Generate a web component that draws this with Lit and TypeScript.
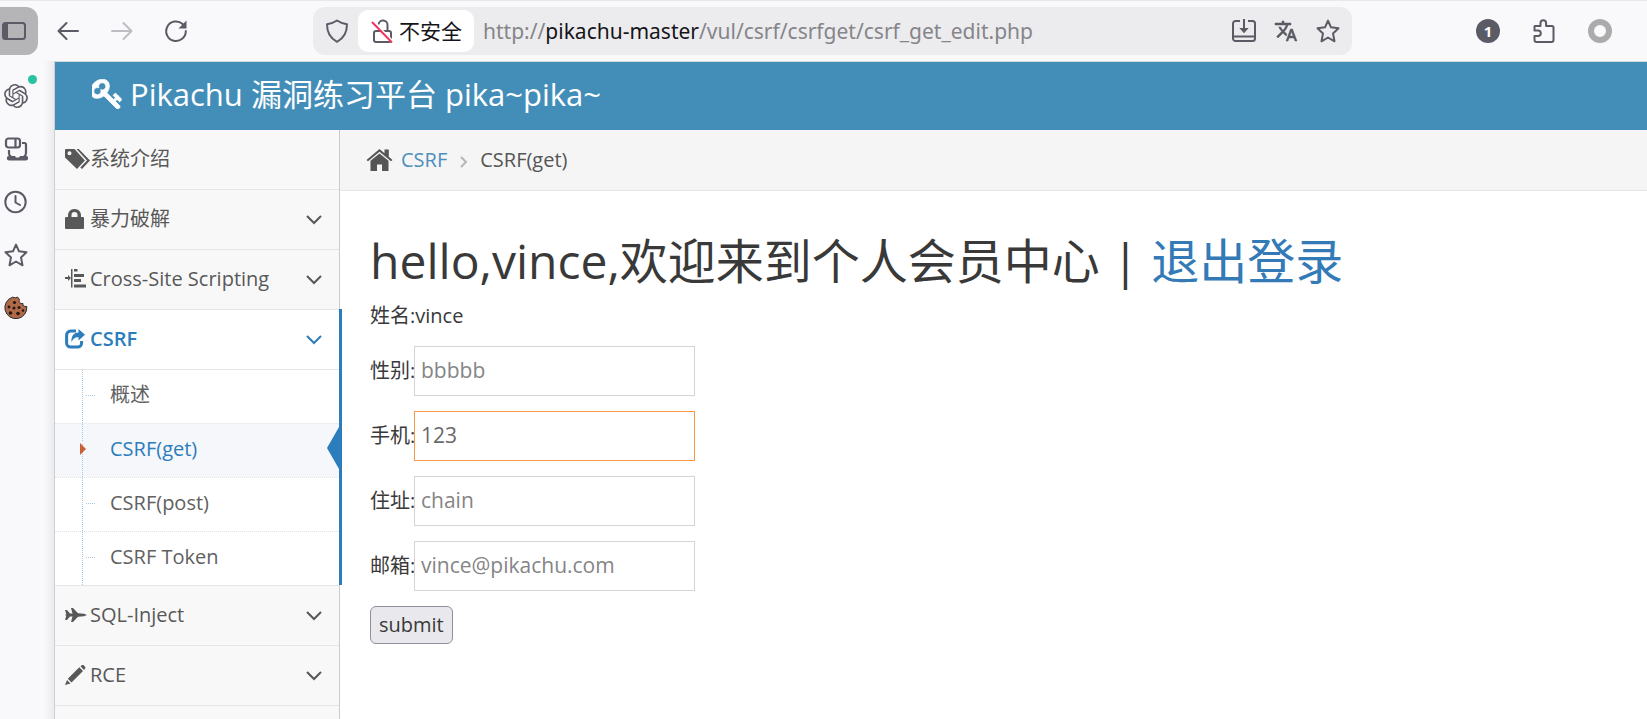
import { LitElement, html, css, svg, nothing } from "lit";
import { customElement, property } from "lit/decorators.js";

const icons: Record<string, { box: string; art: unknown }> = {
  panel: {
    box: "0 0 24 24",
    art: svg`<rect x="1" y="4" width="22" height="16" rx="2.5" fill="none" stroke="currentColor" stroke-width="2"/><path d="M1 5h5v14H1z"/>`,
  },
  back: {
    box: "0 0 24 24",
    art: svg`<path d="M22 12H3M10.500 4L2.500 12l8 8" fill="none" stroke="currentColor" stroke-width="2" stroke-linecap="round" stroke-linejoin="round"/>`,
  },
  forward: {
    box: "0 0 24 24",
    art: svg`<path d="M2 12h19M13.500 4l8 8-8 8" fill="none" stroke="currentColor" stroke-width="2" stroke-linecap="round" stroke-linejoin="round"/>`,
  },
  reload: {
    box: "0 0 24 24",
    art: svg`<path d="M18.600 5A9.800 9.800 0 1 0 21.800 12" fill="none" stroke="currentColor" stroke-width="2" stroke-linecap="round"/><path d="M22.500 1.500v8h-8z"/>`,
  },
  shield: {
    box: "0 0 24 24",
    art: svg`<path d="M12 1.500c3 2 6 3.300 10 3.800C22 13 19.500 19 12 22.800 4.500 19 2 13 2 5.300c4-.5 7-1.800 10-3.800z" fill="none" stroke="currentColor" stroke-width="2" stroke-linejoin="round"/>`,
  },
  insecure: {
    box: "0 0 24 24",
    art: svg`<path d="M7.500 5.500A4.500 4.500 0 0 1 16.500 6.500V12M3 14v7a2 2 0 0 0 2 2h13a2 2 0 0 0 2-2v-7a2 2 0 0 0-2-2H5a2 2 0 0 0-2 2z" fill="none" stroke="currentColor" stroke-width="2"/><path d="M2.500 2.500l19 19.500" stroke="#fff" stroke-width="2"/><path d="M1 3l20 20.500" stroke="#f0355f" stroke-width="2"/>`,
  },
  download: {
    box: "0 0 24 24",
    art: svg`<path d="M8 2H3.500A2.500 2.500 0 0 0 1 4.500v15A2.500 2.500 0 0 0 3.500 22h17a2.500 2.500 0 0 0 2.500-2.500v-15A2.500 2.500 0 0 0 20.500 2H16M1 17.500h22M12 0v11" fill="none" stroke="currentColor" stroke-width="2"/><path d="M7.300 9h9.400L12 14.200z"/>`,
  },
  translate: {
    box: "0 1 24 22",
    art: svg`<path stroke="currentColor" stroke-width=".5" d="M12.870 15.070l-2.540-2.510.03-.03c1.740-1.940 2.980-4.170 3.710-6.530H17V4h-7V2H8v2H1v1.990h11.170C11.500 7.920 10.440 9.750 9 11.350 8.070 10.320 7.300 9.190 6.690 8h-2c.73 1.630 1.730 3.170 2.980 4.560l-5.090 5.020L4 19l5-5 3.110 3.110.76-2.040zM18.500 10h-2L12 22h2l1.120-3h4.750L21 22h2l-4.500-12zm-2.620 7l1.620-4.330L19.120 17h-3.240z"/>`,
  },
  star: {
    box: "0 0 24 24",
    art: svg`<path d="M12 1.600l3 6.700 7.500.9-5.500 5.200 1.500 7.900L12 18.500l-6.500 3.800L7 14.400 1.500 9.200 9 8.300z" fill="none" stroke="currentColor" stroke-width="2" stroke-linejoin="round"/>`,
  },
  puzzle: {
    box: "0 0 24 24",
    art: svg`<path d="M3 7h5.500V4a2.800 2.800 0 0 1 5.600 0v3H20a1.500 1.500 0 0 1 1.500 1.500V21a2 2 0 0 1-2 2h-15a2 2 0 0 1-2-2v-4H6a2.800 2.800 0 0 0 0-5.600H2.500V7.500z" fill="none" stroke="currentColor" stroke-width="2" stroke-linejoin="round"/>`,
  },
  ring: {
    box: "0 0 24 24",
    art: svg`<circle cx="12" cy="12" r="9" fill="none" stroke="#ababab" stroke-width="6"/>`,
  },
  knot: {
    box: "0 0 24 24",
    art: svg`<path d="M22.2819 9.8211a5.9847 5.9847 0 0 0-.5157-4.9108 6.0462 6.0462 0 0 0-6.5098-2.9A6.0651 6.0651 0 0 0 4.9807 4.1818a5.9847 5.9847 0 0 0-3.9977 2.9 6.0462 6.0462 0 0 0 .7427 7.0966 5.98 5.98 0 0 0 .511 4.9107 6.051 6.051 0 0 0 6.5146 2.9001A5.9847 5.9847 0 0 0 13.2599 24a6.0557 6.0557 0 0 0 5.7718-4.2058 5.9894 5.9894 0 0 0 3.9977-2.9001 6.0557 6.0557 0 0 0-.7475-7.0729zm-9.022 12.6081a4.4755 4.4755 0 0 1-2.8764-1.0408l.1419-.0804 4.7783-2.7582a.7948.7948 0 0 0 .3927-.6813v-6.7369l2.02 1.1686a.071.071 0 0 1 .038.052v5.5826a4.504 4.504 0 0 1-4.4945 4.4944zm-9.6607-4.1254a4.4708 4.4708 0 0 1-.5346-3.0137l.142.0852 4.783 2.7582a.7712.7712 0 0 0 .7806 0l5.8428-3.3685v2.3324a.0804.0804 0 0 1-.0332.0615L9.74 19.9502a4.4992 4.4992 0 0 1-6.1408-1.6464zM2.3408 7.8956a4.485 4.485 0 0 1 2.3655-1.9728V11.6a.7664.7664 0 0 0 .3879.6765l5.8144 3.3543-2.0201 1.1685a.0757.0757 0 0 1-.071 0l-4.8303-2.7865A4.504 4.504 0 0 1 2.3408 7.872zm16.5963 3.8558L13.1038 8.364 15.1192 7.2a.0757.0757 0 0 1 .071 0l4.8303 2.7913a4.4944 4.4944 0 0 1-.6765 8.1042v-5.6772a.79.79 0 0 0-.407-.667zm2.0107-3.0231l-.142-.0852-4.7735-2.7818a.7759.7759 0 0 0-.7854 0L9.409 9.2297V6.8974a.0662.0662 0 0 1 .0284-.0615l4.8303-2.7866a4.4992 4.4992 0 0 1 6.6802 4.66zM8.3065 12.863l-2.02-1.1638a.0804.0804 0 0 1-.038-.0567V6.0742a4.4992 4.4992 0 0 1 7.3757-3.4537l-.142.0805L8.704 5.459a.7948.7948 0 0 0-.3927.6813zm1.0976-2.3654l2.602-1.4998 2.6069 1.4998v2.9994l-2.5974 1.4997-2.6067-1.4997Z"/>`,
  },
  devices: {
    box: "0 0 24 24",
    art: svg`<g fill="none" stroke="currentColor" stroke-width="2.200"><rect x="2" y="1.500" width="14" height="9" rx="2.500"/><path d="M11.500 1.500v9M18 6h2.500a1.500 1.500 0 0 1 1.500 1.500V16q0 2.500-2 3.500M5 13v3.500q0 2 2 3"/></g><path d="M5 19h6l1 1.500h3L16 19h6a2.200 2.200 0 0 1 0 4.400H5A2.200 2.200 0 0 1 5 19z"/>`,
  },
  clock: {
    box: "0 0 24 24",
    art: svg`<circle cx="11.500" cy="12" r="10.200" fill="none" stroke="currentColor" stroke-width="2"/><path d="M11.500 6v6.500l4.500 2.500" fill="none" stroke="currentColor" stroke-width="2" stroke-linecap="round"/>`,
  },
  cookie: {
    box: "0 0 24 24",
    art: svg`<path d="M8.500 1.200A11 11 0 1 0 22.800 10.500C20 11 18.500 9.500 19 7.500 16 8 14.500 6 15.500 3.500L13.500 1l-2 .8z" fill="#b06a48" stroke="#2b2b2b" stroke-width="1"/><g fill="#231815"><circle cx="10.500" cy="6.500" r="1.600"/><circle cx="5" cy="11" r="1.400"/><circle cx="10" cy="12" r="1.500"/><circle cx="15" cy="11.500" r="1.500"/><circle cx="6.500" cy="17" r="1.800"/><circle cx="14" cy="17.500" r="1.800"/><circle cx="19" cy="14.500" r="1.300"/></g>`,
  },
  key: {
    box: "96 120 1600 1600",
    art: svg`<path stroke="currentColor" stroke-width="40" d="M832 512q0-80-56-136t-136-56-136 56-56 136q0 42 19 83-41-19-83-19-80 0-136 56t-56 136 56 136 136 56 136-56 56-136q0-42-19-83 41 19 83 19 80 0 136-56t56-136zm851 704q0 17-49 66t-66 49q-9 0-28.500-16t-36.500-33-38.500-40-24.500-26l-96 96 220 220q28 28 28 68 0 42-39 81t-81 39q-40 0-68-28l-671-671q-176 131-365 131-163 0-265.500-102.500t-102.500-265.500q0-160 95-313t248-248 313-95q163 0 265.500 102.500t102.500 265.500q0 189-131 365l355 355 96-96q-3-3-26-24.500t-40-38.500-33-36.500-16-28.500q0-17 49-66t66-49q13 0 23 10 6 6 46 44.500t82 79.500 86.500 86 73 78 28.500 41z"/>`,
  },
  tags: {
    box: "0 0 25 20",
    art: svg`<path fill-rule="evenodd" d="M1 0h8.500L20 11.500 12 20 0 8.500V1a1 1 0 0 1 1-1zm3.500 2.300a2 2 0 1 0 0 4 2 2 0 0 0 0-4z"/><path d="M11.500 0h2.300L25 11.500 17 20l-1.700-1.400 6.700-7.100z"/>`,
  },
  lock: {
    box: "0 0 25 20",
    art: svg`<path fill-rule="evenodd" d="M3 8V6a6 6 0 0 1 6-6h1a6 6 0 0 1 6 6v2h2a1 1 0 0 1 1 1v10a1 1 0 0 1-1 1H1a1 1 0 0 1-1-1V9a1 1 0 0 1 1-1zm3.500 0h6V6a3 3 0 0 0-6 0z"/>`,
  },
  indent: {
    box: "1 0 25 20",
    art: svg`<path d="M0 8h4V6l3 3-3 3v-2H0zM7 0h1.500v18.500H7zM10 0h3.500v2.500H10zM10 5h10v3H10zM10 10h7v3H10zM10 15.500h12v3H10z"/>`,
  },
  share: {
    box: "0 0 25 20",
    art: svg`<path d="M11 2H5.500A4 4 0 0 0 1.600 6v8a4 4 0 0 0 4 4h7a4 4 0 0 0 4-4v-2" fill="none" stroke="currentColor" stroke-width="3"/><path d="M13.500 0L20 5.800l-6.500 5.700V8.200C10 8 8 9.500 6.500 13 6 7.500 8.500 3.700 13.500 3.500z"/>`,
  },
  plane: {
    box: "0 0 25 20",
    art: svg`<path d="M0 5h2l3 3.600h2.500L6 3h2l5 5.300 6 .5 3 1.200-3 1.200-6 .5L8 17H6l1.500-5.600H5L2 15H0l1.300-4.200L0 10l1.300-.8z"/>`,
  },
  pencil: {
    box: "0 0 25 20",
    art: svg`<path d="M15.500 1.200L17 0q1-.5 2 .5l1 1.200q.8 1 0 2L19 5zM14.300 2.300l3.700 3.700L6.500 17.500 2.800 13.800zM2 15l3.500 3.500L0 20z"/>`,
  },
  home: {
    box: "0 0 26 22",
    art: svg`<path d="M13 0l5 4.200V.5h4.300v7.300L26 11l-1.500 1.300L13 2.700 1.500 12.300 0 11z"/><path d="M13 4.500l9 7.300V22h-6.500v-6.500h-5V22H4V11.800z"/>`,
  },
};

@customElement("ui-icon")
class UiIcon extends LitElement {
  @property() name = "";
  static styles = css`
    :host { display: inline-block; flex: none; width: 24px; height: 24px; }
    .art { display: block; width: 100%; height: 100%; fill: currentColor; }
  `;
  render() {
    const icon = icons[this.name];
    return icon
      ? html`<svg class="art" viewBox=${icon.box} aria-hidden="true">${icon.art}</svg>`
      : nothing;
  }
}

@customElement("browser-bar")
class BrowserBar extends LitElement {
  static styles = css`
    :host {
      display: flex; align-items: center; height: 61px; padding: 0 35px 0 0;
      box-sizing: border-box; background: #f9f9fb; color: #5b5b66;
      border-top: 1px solid #e8e8ea;
      font: 21px/30px "Noto Sans", "Noto Sans CJK SC", sans-serif;
    }
    button { border: 0; padding: 0; margin: 0; background: none; color: inherit; font: inherit; display: flex; align-items: center; }
    .panel { width: 38px; height: 48px; padding-left: 2px; box-sizing: border-box; background: #b5b5b7; border-radius: 0 12px 12px 0; }
    .moves { display: flex; gap: 30px; margin-left: 18px; }
    .off { color: #bdbdc3; }
    .address {
      flex: 1; min-width: 0; display: flex; align-items: center; height: 48px; margin-left: 125px;
      padding: 0 12px; box-sizing: border-box; border-radius: 12px; background: #ececee;
    }
    .chip {
      height: 42px; margin: 0 9px; padding: 0 12px 0 13px; gap: 4px; white-space: nowrap;
      border-radius: 10px; background: #fff; color: #15141a;
    }
    .chip ui-icon { color: #5b5b66; }
    .url { flex: 1; min-width: 0; overflow: hidden; white-space: nowrap; color: #85858a; }
    .host { color: #15141a; }
    .page-tools { display: flex; gap: 18px; }
    .tools { display: flex; align-items: center; gap: 32px; margin-left: 124px; }
    .count {
      width: 24px; height: 24px; justify-content: center; border-radius: 12px; background: #5b5b66;
      color: #fff; font-size: 15px; font-weight: 700; line-height: 24px;
    }
  `;
  render() {
    return html`
      <button class="panel" aria-label="侧栏"><ui-icon name="panel"></ui-icon></button>
      <div class="moves">
        <button aria-label="后退"><ui-icon name="back"></ui-icon></button>
        <button class="off" aria-label="前进"><ui-icon name="forward"></ui-icon></button>
        <button aria-label="刷新"><ui-icon name="reload"></ui-icon></button>
      </div>
      <div class="address">
        <ui-icon name="shield"></ui-icon>
        <button class="chip"><ui-icon name="insecure"></ui-icon>不安全</button>
        <span class="url">http://<span class="host">pikachu-master</span>/vul/csrf/csrfget/csrf_get_edit.php</span>
        <div class="page-tools">
          <button aria-label="安装"><ui-icon name="download"></ui-icon></button>
          <button aria-label="翻译"><ui-icon name="translate"></ui-icon></button>
          <button aria-label="收藏"><ui-icon name="star"></ui-icon></button>
        </div>
      </div>
      <div class="tools">
        <button class="count">1</button>
        <button aria-label="扩展"><ui-icon name="puzzle"></ui-icon></button>
        <button aria-label="账户"><ui-icon name="ring"></ui-icon></button>
      </div>
    `;
  }
}

@customElement("side-rail")
class SideRail extends LitElement {
  static styles = css`
    :host {
      display: flex; flex-direction: column; align-items: flex-start; gap: 29px;
      padding: 23px 0 0 4px; box-sizing: border-box; color: #5b5b66; border-right: 1px solid #cfcfd1;
      background: linear-gradient(to right, #f9f9fb 44px, #ebebed);
    }
    button { position: relative; display: flex; padding: 0; border: 0; background: none; color: inherit; }
    .dot { position: absolute; right: -9px; top: -9px; width: 9px; height: 9px; border-radius: 5px; background: #2ac3a2; }
  `;
  render() {
    return html`
      <button aria-label="AI"><ui-icon name="knot"></ui-icon><span class="dot"></span></button>
      <button aria-label="同步的标签页"><ui-icon name="devices"></ui-icon></button>
      <button aria-label="历史"><ui-icon name="clock"></ui-icon></button>
      <button aria-label="书签"><ui-icon name="star"></ui-icon></button>
      <button aria-label="Cookie"><ui-icon name="cookie"></ui-icon></button>
    `;
  }
}

interface Section { icon: string; label: string; open?: boolean; leaf?: boolean; children?: string[] }

const sections: Section[] = [
  { icon: "tags", label: "系统介绍", leaf: true },
  { icon: "lock", label: "暴力破解" },
  { icon: "indent", label: "Cross-Site Scripting" },
  { icon: "share", label: "CSRF", open: true, children: ["概述", "CSRF(get)", "CSRF(post)", "CSRF Token"] },
  { icon: "plane", label: "SQL-Inject" },
  { icon: "pencil", label: "RCE" },
];

@customElement("nav-menu")
class NavMenu extends LitElement {
  @property() current = "CSRF(get)";
  static styles = css`
    :host { display: block; background: #f8f8f8; border-right: 1px solid #ccc; color: #585858; }
    ul { list-style: none; margin: 0; padding: 0; }
    a { color: inherit; text-decoration: none; display: flex; align-items: center; box-sizing: border-box; }
    .section { position: relative; }
    .head { height: 60px; padding: 0 17px 2px 10px; border-bottom: 1px solid #e5e5e5; }
    .head ui-icon { width: 25px; height: 20px; }
    .label { flex: 1; }
    .chevron { width: 16px; height: 10px; margin-top: 2px; fill: none; stroke: currentColor; stroke-width: 2; }
    .open { background: #fff; }
    .open > .head { color: #2b7dbc; font-weight: 600; }
    .open::after { content: ""; position: absolute; top: -1px; bottom: 1px; right: -3px; width: 3px; background: #2b7dbc; }
    .sub { position: relative; border-bottom: 1px solid #e5e5e5; }
    .sub::before { content: ""; position: absolute; z-index: 1; top: 0; bottom: 0; left: 27px; border-left: 1px dotted #a9c8df; }
    .item { position: relative; }
    .item + .item { border-top: 1px dotted #e4e4e4; }
    .item::before { content: ""; position: absolute; left: 31px; top: 25px; width: 9px; border-top: 1px dotted #a9c8df; }
    .leaf { height: 53px; padding: 0 16px 3px 55px; color: #616161; }
    .current { background: #f5f7fa; }
    .current .leaf { color: #2b7dbc; }
    .item.current::before {
      z-index: 2; left: 25px; top: 19px; width: 0; background: none;
      border: solid transparent; border-width: 6px 0 6px 6px; border-left-color: #c86139;
      outline: 1px solid #f5f7fa;
    }
    .current::after {
      content: ""; position: absolute; right: 0; top: 3px;
      border: solid transparent; border-width: 21px 12px 21px 0; border-right-color: #2b7dbc;
    }
  `;
  render() {
    return html`<nav><ul>${sections.map((s) => html`
      <li class="section ${s.open ? "open" : ""}">
        <a class="head" href="#">
          <ui-icon name=${s.icon}></ui-icon><span class="label">${s.label}</span>
          ${s.leaf ? nothing : html`<svg class="chevron" viewBox="0 0 16 10"><path d="M1 1l7 7 7-7"/></svg>`}
        </a>
        ${s.children ? html`<ul class="sub">${s.children.map((c) => html`
          <li class="item ${c === this.current ? "current" : ""}"><a class="leaf" href="#">${c}</a></li>`)}
        </ul>` : nothing}
      </li>`)}</ul></nav>`;
  }
}

const fields = [
  { id: "sex", label: "性别:", value: "bbbbb" },
  { id: "phone", label: "手机:", value: "123", active: true },
  { id: "address", label: "住址:", value: "chain" },
  { id: "email", label: "邮箱:", value: "vince@pikachu.com" },
];

@customElement("member-page")
class MemberPage extends LitElement {
  static styles = css`
    :host { display: block; min-width: 0; background: #fff; }
    a { text-decoration: none; }
    .crumbs { display: flex; align-items: center; height: 61px; padding: 0 26px; box-sizing: border-box; background: #f5f5f5; border-bottom: 1px solid #e5e5e5; color: #555; }
    .home { width: 27px; height: 22px; margin-right: 8px; }
    .crumbs a { color: #4c8fbd; }
    .sep { width: 8px; height: 12px; margin: 4px 12px 0 13px; fill: none; stroke: #b2b6bf; stroke-width: 2; }
    .body { padding: 34px 30px; color: #393939; }
    h1 { margin: 0 0 3px; font-size: 48px; line-height: 72px; font-weight: 400; }
    h1 a { color: #337ab7; }
    .name { margin: 0 0 14px; line-height: 32px; }
    .row { display: flex; align-items: center; margin-bottom: 15px; }
    label { width: 44px; white-space: nowrap; }
    input {
      width: 281px; height: 50px; box-sizing: border-box; margin: 0; padding: 0 6px 2px;
      border: 1px solid #d5d5d5; border-radius: 0; background: #fff; color: #858585;
      font: inherit; font-size: 21px; outline: 0;
    }
    .active { border-color: #f59942; color: #696969; }
    .submit { height: 38px; padding: 0 8px; border: 1px solid #8f8f9d; border-radius: 6px; background: #e9e9ed; color: #393939; font: inherit; }
  `;
  render() {
    return html`
      <nav class="crumbs">
        <ui-icon class="home" name="home"></ui-icon><a href="#">CSRF</a>
        <svg class="sep" viewBox="0 0 8 12"><path d="M1 1l5 5-5 5"/></svg><span>CSRF(get)</span>
      </nav>
      <main class="body">
        <h1>hello,vince,欢迎来到个人会员中心 | <a href="#">退出登录</a></h1>
        <p class="name">姓名:vince</p>
        <form @submit=${(e: Event) => e.preventDefault()}>
          ${fields.map((f) => html`<div class="row">
            <label for=${f.id}>${f.label}</label>
            <input id=${f.id} class=${f.active ? "active" : ""} type="text" .value=${f.value} />
          </div>`)}
          <button class="submit">submit</button>
        </form>
      </main>
    `;
  }
}

@customElement("app-root")
class AppRoot extends LitElement {
  static styles = css`
    :host { display: flex; flex-direction: column; height: 100vh; overflow: hidden; font: 20px/30px "Open Sans", "Noto Sans CJK SC", sans-serif; }
    .window { flex: 1; min-height: 0; display: grid; grid-template-columns: 55px minmax(0, 1fr); }
    .site { display: flex; flex-direction: column; min-height: 0; border-top: 1px solid #d5dad9; }
    .brand { flex: none; display: flex; align-items: center; gap: 8px; height: 68px; padding: 0 37px 4px; box-sizing: border-box; background: #438eb9; color: #fff; font-size: 31px; line-height: 44px; white-space: nowrap; }
    .brand ui-icon { width: 30px; height: 30px; }
    .columns { flex: 1; min-height: 0; display: grid; grid-template-columns: 285px minmax(0, 1fr); }
    nav-menu { position: relative; z-index: 1; }
  `;
  render() {
    return html`
      <browser-bar></browser-bar>
      <div class="window">
        <side-rail></side-rail>
        <div class="site">
          <header class="brand"><ui-icon name="key"></ui-icon><span>Pikachu 漏洞练习平台 pika~pika~</span></header>
          <div class="columns">
            <nav-menu></nav-menu>
            <member-page></member-page>
          </div>
        </div>
      </div>
    `;
  }
}
